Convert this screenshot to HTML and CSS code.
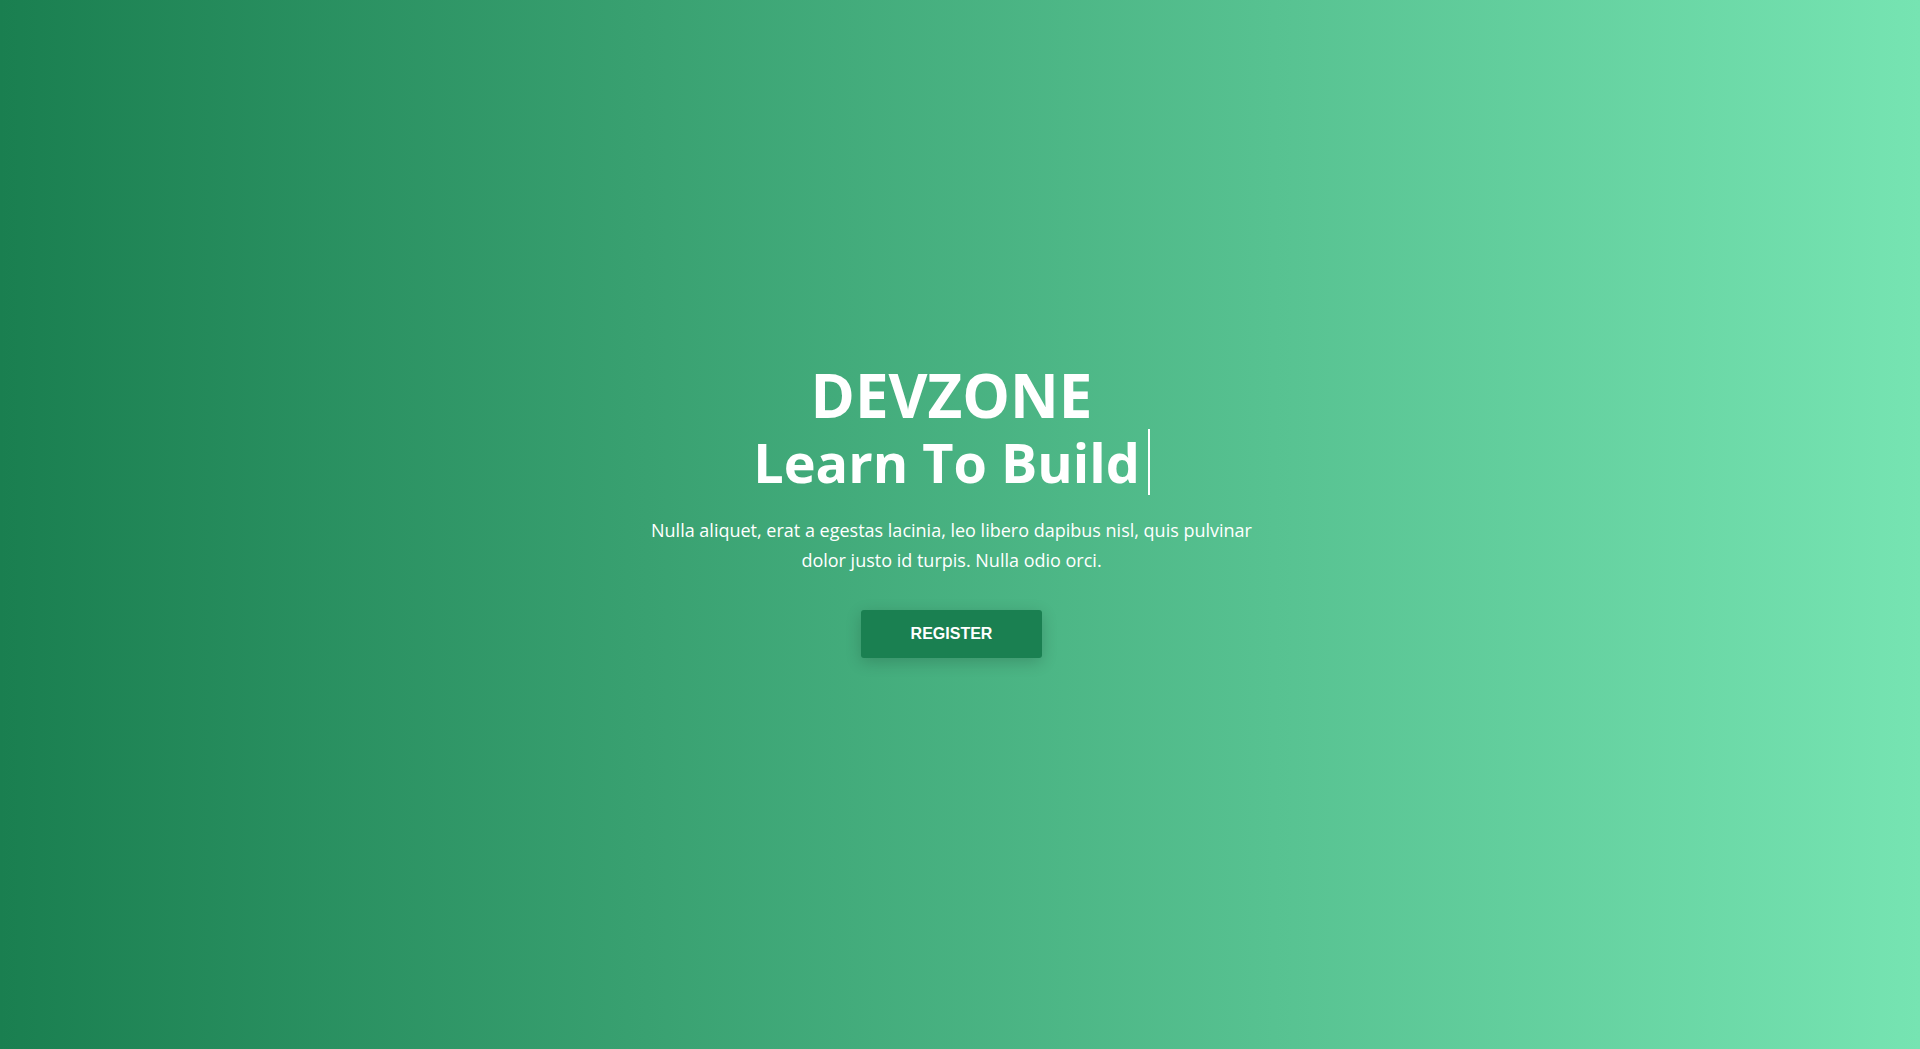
FILE: index.html
```html
<!DOCTYPE html>
<html lang="en">
<head>
<meta charset="utf-8">
<title>DevZone</title>
<link rel="stylesheet" href="styles.css">
</head>
<body>
<header class="hero">
  <div class="hero-inner">
    <h1 class="hero-title">
      <span class="brand">DEVZONE</span>
      <span class="typed">Learn To Build</span>
    </h1>
    <p class="hero-text">Nulla aliquet, erat a egestas lacinia, leo libero dapibus nisl, quis pulvinar dolor justo id turpis. Nulla odio orci.</p>
    <a class="btn" href="#register">REGISTER</a>
  </div>
</header>
<main class="below">
  <section class="section" id="about"></section>
  <section class="section" id="courses"></section>
  <section class="section" id="mentors"></section>
  <section class="section" id="projects"></section>
  <section class="section" id="events"></section>
  <section class="section" id="pricing"></section>
  <section class="section" id="faq"></section>
  <section class="section" id="register"></section>
  <section class="section" id="contact"></section>
</main>
</body>
</html>
```

FILE: styles.css
```css
html, body {
  margin: 0;
  padding: 0;
}

body {
  font-family: "Open Sans", "Noto Sans", sans-serif;
  color: #fff;
  background: #fff;
}

.hero {
  height: 100vh;
  box-sizing: border-box;
  padding: 0 17px 29px 0;
  display: flex;
  align-items: center;
  justify-content: center;
  background: linear-gradient(to right, #1a7f50 0%, #76e4b2 100%);
  text-align: center;
}

.hero-inner {
  display: flex;
  flex-direction: column;
  align-items: center;
  max-width: 620px;
}

.hero-title {
  margin: 0;
  font-weight: 700;
  display: flex;
  flex-direction: column;
  align-items: center;
}

.brand {
  font-size: 60px;
  line-height: 66px;
}

.typed {
  display: inline-block;
  font-size: 54px;
  line-height: 66px;
  padding-right: 8px;
  border-right: 2px solid #fff;
  margin-top: 1px;
}

.hero-text {
  margin: 20px 0 0;
  font-size: 18px;
  line-height: 30px;
  font-weight: 400;
}

.btn {
  display: inline-block;
  margin-top: 35px;
  width: 181px;
  box-sizing: border-box;
  padding: 15px 0;
  font-family: "Liberation Sans", Arial, sans-serif;
  font-weight: 700;
  font-size: 16px;
  line-height: 18px;
  color: #fff;
  text-decoration: none;
  background: #1a8051;
  border-radius: 3px;
  box-shadow: 0 4px 16px rgba(0, 0, 0, 0.18);
}

.section {
  min-height: 1049px;
}
```
